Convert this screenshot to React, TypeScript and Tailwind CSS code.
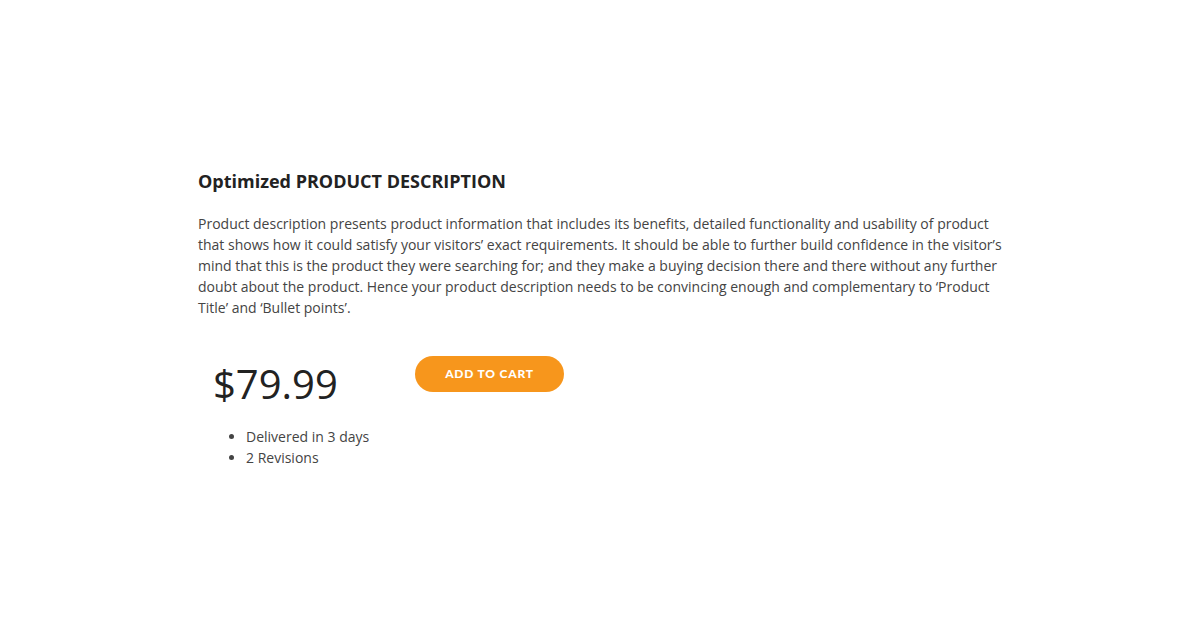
import React from "react";

export default function App() {
  return (
    <div className="min-h-[641px] w-full bg-white" style={{ fontFamily: '"Open Sans", sans-serif' }}>
      <div className="mx-auto w-[807px] pt-[169px]">
        <h2 className="text-[18px] font-bold leading-[24px] text-[#222222]">Optimized PRODUCT DESCRIPTION</h2>
        <p className="mt-[20px] text-[14px] leading-[21px] text-[#444444]">
          Product description presents product information that includes its benefits, detailed functionality and usability of product that shows how it could satisfy your visitors’ exact requirements. It should be able to further build confidence in the visitor’s mind that this is the product they were searching for; and they make a buying decision there and there without any further doubt about the product. Hence your product description needs to be convincing enough and complementary to ‘Product Title’ and ‘Bullet points’.
        </p>
        <div className="mt-[38px] flex items-start">
          <div className="ml-[15px] w-[202px] pt-[3px] text-[40px] leading-[50px] text-[#222222]">$79.99</div>
          <button
            className="h-[36px] w-[149px] rounded-full bg-[#f7961c] text-[12px] font-black tracking-[0.8px] text-white"
            style={{ fontFamily: 'Lato, sans-serif' }}
          >
            ADD TO CART
          </button>
        </div>
        <ul className="mt-[17px] ml-[48px] list-disc text-[14px] leading-[21px] text-[#444444]">
          <li>Delivered in 3 days</li>
          <li>2 Revisions</li>
        </ul>
      </div>
    </div>
  );
}
